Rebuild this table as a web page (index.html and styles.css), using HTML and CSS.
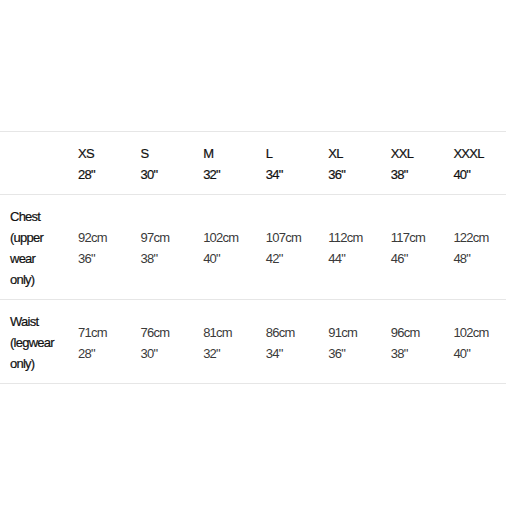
FILE: index.html
```html
<!DOCTYPE html>
<html>
<head>
<meta charset="utf-8">
<link rel="stylesheet" href="styles.css">
</head>
<body>
<section class="size-guide">
  <table class="size-table">
    <colgroup>
      <col class="col-label">
      <col><col><col><col><col><col><col>
    </colgroup>
    <thead>
      <tr>
        <th></th>
        <th>XS<br>28"</th>
        <th>S<br>30"</th>
        <th>M<br>32"</th>
        <th>L<br>34"</th>
        <th>XL<br>36"</th>
        <th>XXL<br>38"</th>
        <th>XXXL<br>40"</th>
      </tr>
    </thead>
    <tbody>
      <tr>
        <th>Chest (upper wear only)</th>
        <td>92cm<br>36"</td>
        <td>97cm<br>38"</td>
        <td>102cm<br>40"</td>
        <td>107cm<br>42"</td>
        <td>112cm<br>44"</td>
        <td>117cm<br>46"</td>
        <td>122cm<br>48"</td>
      </tr>
      <tr>
        <th>Waist (legwear only)</th>
        <td>71cm<br>28"</td>
        <td>76cm<br>30"</td>
        <td>81cm<br>32"</td>
        <td>86cm<br>34"</td>
        <td>91cm<br>36"</td>
        <td>96cm<br>38"</td>
        <td>102cm<br>40"</td>
      </tr>
    </tbody>
  </table>
</section>
</body>
</html>
```
FILE: styles.css
```css
html, body {
  margin: 0;
  padding: 0;
  background: #ffffff;
}

body {
  font-family: "Liberation Sans", Arial, sans-serif;
  font-size: 13px;
  line-height: 21px;
  color: #111111;
}

.size-guide {
  padding-top: 131px;
}

.size-table {
  width: 506px;
  border-collapse: collapse;
  table-layout: fixed;
  border-top: 1px solid #e6e6e6;
}

.col-label {
  width: 68px;
}

.size-table tr {
  border-bottom: 1px solid #e6e6e6;
}

.size-table th,
.size-table td {
  padding: 11px 0 9px 10px;
  text-align: left;
  vertical-align: middle;
  letter-spacing: -0.75px;
  white-space: nowrap;
}

.size-table th {
  font-weight: 400;
  color: #111111;
  -webkit-text-stroke: 0.2px #111111;
}

.size-table tbody th {
  white-space: normal;
  word-spacing: 100px;
  vertical-align: top;
}

.size-table td {
  font-weight: 400;
  color: #3a3a3a;
}
```
